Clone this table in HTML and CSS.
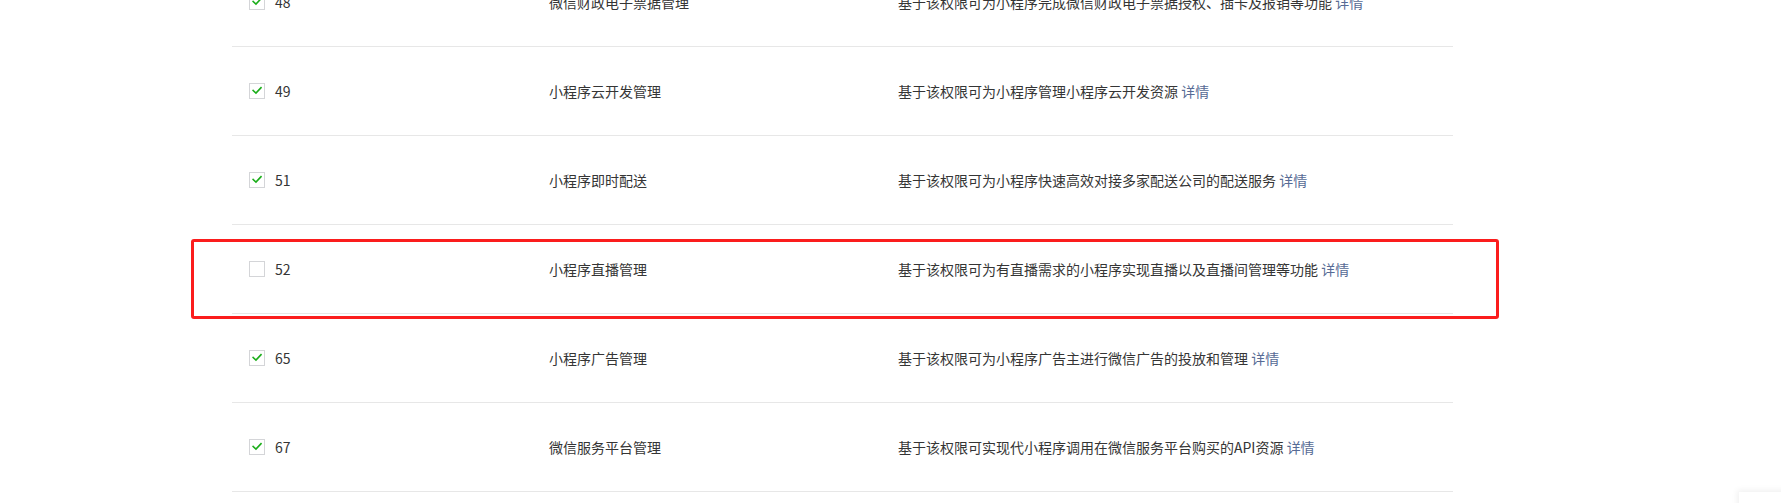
FILE: index.html
```html
<!DOCTYPE html>
<html lang="zh-CN">
<head>
<meta charset="utf-8">
<title>权限列表</title>
<link rel="stylesheet" href="styles.css">
</head>
<body>
<div class="page">
  <div class="table">
    <div class="row">
      <div class="col-id"><span class="cb checked"><svg viewBox="0 0 16 16"><path d="M3.6 7.4 L6.8 10.4 L12.6 4.2"/></svg></span><span class="num">48</span></div>
      <div class="col-name">微信财政电子票据管理</div>
      <div class="col-desc">基于该权限可为小程序完成微信财政电子票据授权、插卡及报销等功能 <a class="link">详情</a></div>
    </div>
    <div class="row">
      <div class="col-id"><span class="cb checked"><svg viewBox="0 0 16 16"><path d="M3.6 7.4 L6.8 10.4 L12.6 4.2"/></svg></span><span class="num">49</span></div>
      <div class="col-name">小程序云开发管理</div>
      <div class="col-desc">基于该权限可为小程序管理小程序云开发资源 <a class="link">详情</a></div>
    </div>
    <div class="row">
      <div class="col-id"><span class="cb checked"><svg viewBox="0 0 16 16"><path d="M3.6 7.4 L6.8 10.4 L12.6 4.2"/></svg></span><span class="num">51</span></div>
      <div class="col-name">小程序即时配送</div>
      <div class="col-desc">基于该权限可为小程序快速高效对接多家配送公司的配送服务 <a class="link">详情</a></div>
    </div>
    <div class="row highlighted">
      <div class="col-id"><span class="cb"></span><span class="num">52</span></div>
      <div class="col-name">小程序直播管理</div>
      <div class="col-desc">基于该权限可为有直播需求的小程序实现直播以及直播间管理等功能 <a class="link">详情</a></div>
      <div class="mark"></div>
    </div>
    <div class="row">
      <div class="col-id"><span class="cb checked"><svg viewBox="0 0 16 16"><path d="M3.6 7.4 L6.8 10.4 L12.6 4.2"/></svg></span><span class="num">65</span></div>
      <div class="col-name">小程序广告管理</div>
      <div class="col-desc">基于该权限可为小程序广告主进行微信广告的投放和管理 <a class="link">详情</a></div>
    </div>
    <div class="row">
      <div class="col-id"><span class="cb checked"><svg viewBox="0 0 16 16"><path d="M3.6 7.4 L6.8 10.4 L12.6 4.2"/></svg></span><span class="num">67</span></div>
      <div class="col-name">微信服务平台管理</div>
      <div class="col-desc">基于该权限可实现代小程序调用在微信服务平台购买的API资源 <a class="link">详情</a></div>
    </div>
  </div>
</div>
<div class="float-corner"></div>
</body>
</html>
```

FILE: styles.css
```css
html, body {
  margin: 0;
  padding: 0;
  background: #ffffff;
  height: 503px;
  overflow: hidden;
}

body {
  font-family: "Microsoft YaHei", "Noto Sans CJK SC", "Noto Sans", sans-serif;
  font-size: 14px;
  color: #353535;
}

.page {
  padding-left: 232px;
  width: 1221px;
}

.table {
  margin-top: -42px;
}

.row {
  position: relative;
  display: flex;
  align-items: center;
  height: 88px;
  border-bottom: 1px solid #e7e7e7;
  line-height: 20px;
}

.col-id {
  width: 300px;
  padding-left: 17px;
  display: flex;
  align-items: center;
}

.col-name {
  width: 349px;
}

.col-desc {
  flex: 1;
}

.cb {
  box-sizing: border-box;
  width: 16px;
  height: 16px;
  border: 1px solid #d4d5d8;
  background: #fff;
  display: inline-flex;
  margin-right: 10px;
}

.cb svg {
  width: 14px;
  height: 14px;
}

.cb path {
  fill: none;
  stroke: #1aad19;
  stroke-width: 1.8;
  stroke-linecap: square;
}

.num {
  color: #353535;
}

.link {
  color: #576b95;
  text-decoration: none;
}

.mark {
  position: absolute;
  left: -41px;
  right: -46px;
  top: 14px;
  bottom: -6px;
  border: 3px solid #fb1d1d;
  border-radius: 3px;
  pointer-events: none;
}

.float-corner {
  position: fixed;
  left: 1739px;
  top: 492px;
  width: 80px;
  height: 60px;
  background: #fff;
  box-shadow: -2px -2px 6px rgba(0, 0, 0, 0.06);
}
```
